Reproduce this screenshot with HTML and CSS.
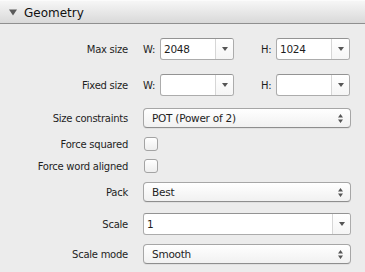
FILE: index.html
```html
<!DOCTYPE html>
<html lang="en">
  <head>
    <meta charset="utf-8">
    <meta name="viewport" content="width=device-width, initial-scale=1.0">
    <title>Geometry</title>
    <link rel="stylesheet" href="styles.css">
  </head>
  <body>
    <div class="panel">
      <div class="panel-header">
        <svg class="disclosure" width="8" height="7" viewBox="0 0 8 7"><path d="M0 0.5 H8 L4 6.5 Z" fill="#5a5a5a"/></svg>
        <span class="panel-title">Geometry</span>
      </div>
      <div class="form">
        <div class="row gap-wide">
          <span class="label">Max size</span>
          <div class="pair">
            <span class="axis">W:</span>
            <div class="combo combo-small">
              <span class="value">2048</span>
              <span class="combo-btn"><svg width="6" height="4" viewBox="0 0 6 4"><path d="M0 0 H6 L3 4 Z" fill="#555"/></svg></span>
            </div>
            <span class="axis axis-h">H:</span>
            <div class="combo combo-small">
              <span class="value">1024</span>
              <span class="combo-btn"><svg width="6" height="4" viewBox="0 0 6 4"><path d="M0 0 H6 L3 4 Z" fill="#555"/></svg></span>
            </div>
          </div>
        </div>
        <div class="row gap-wide">
          <span class="label">Fixed size</span>
          <div class="pair">
            <span class="axis">W:</span>
            <div class="combo combo-small">
              <span class="value"></span>
              <span class="combo-btn"><svg width="6" height="4" viewBox="0 0 6 4"><path d="M0 0 H6 L3 4 Z" fill="#555"/></svg></span>
            </div>
            <span class="axis axis-h">H:</span>
            <div class="combo combo-small">
              <span class="value"></span>
              <span class="combo-btn"><svg width="6" height="4" viewBox="0 0 6 4"><path d="M0 0 H6 L3 4 Z" fill="#555"/></svg></span>
            </div>
          </div>
        </div>
        <div class="row gap-mid">
          <span class="label">Size constraints</span>
          <div class="select">
            <span class="value">POT (Power of 2)</span>
            <svg class="updown" width="5" height="9" viewBox="0 0 5 9"><path d="M2.5 0 L5 3.5 H0 Z M0 5.5 H5 L2.5 9 Z" fill="#555"/></svg>
          </div>
        </div>
        <div class="row">
          <span class="label">Force squared</span>
          <span class="checkbox"></span>
        </div>
        <div class="row gap-tight">
          <span class="label">Force word aligned</span>
          <span class="checkbox"></span>
        </div>
        <div class="row">
          <span class="label">Pack</span>
          <div class="select">
            <span class="value">Best</span>
            <svg class="updown" width="5" height="9" viewBox="0 0 5 9"><path d="M2.5 0 L5 3.5 H0 Z M0 5.5 H5 L2.5 9 Z" fill="#555"/></svg>
          </div>
        </div>
        <div class="row gap-loose">
          <span class="label">Scale</span>
          <div class="combo">
            <span class="value">1</span>
            <span class="combo-btn"><svg width="6" height="4" viewBox="0 0 6 4"><path d="M0 0 H6 L3 4 Z" fill="#555"/></svg></span>
          </div>
        </div>
        <div class="row">
          <span class="label">Scale mode</span>
          <div class="select">
            <span class="value">Smooth</span>
            <svg class="updown" width="5" height="9" viewBox="0 0 5 9"><path d="M2.5 0 L5 3.5 H0 Z M0 5.5 H5 L2.5 9 Z" fill="#555"/></svg>
          </div>
        </div>
      </div>
    </div>
  </body>
</html>
```
FILE: styles.css
```css
body {
  margin: 0;
  padding: 0;
  background: #ececec;
  font-family: "DejaVu Sans", "Liberation Sans", sans-serif;
  font-size: 10px;
  letter-spacing: -0.25px;
  color: #1e1e1e;
}
.panel {
  width: 365px;
  height: 272px;
  overflow: hidden;
}
.panel-header {
  display: flex;
  align-items: center;
  padding-left: 9px;
  background: linear-gradient(#f6f6f6, #d9d9d9);
  border-top: 1px solid #fbfbfb;
  border-bottom: 1px solid #8f8f8f;
  box-sizing: border-box;
  height: 24px;
}
.disclosure {
  margin-right: 7px;
  margin-top: 1px;
}
.panel-title {
  font-size: 12px;
  letter-spacing: 0;
  color: #111;
  padding-top: 1px;
}
.form {
  padding-right: 14px;
}
.row {
  display: grid;
  grid-template-columns: 128px 1fr;
  column-gap: 15px;
  align-items: center;
  margin-top: 9px;
}
.gap-wide {
  margin-top: 14px;
}
.gap-mid {
  margin-top: 12px;
}
.gap-tight {
  margin-top: 8px;
}
.gap-loose {
  margin-top: 11px;
}
.label {
  text-align: right;
  white-space: nowrap;
}
.pair {
  display: flex;
  align-items: center;
}
.axis {
  width: 17px;
}
.axis-h {
  margin-left: 27px;
  width: 15px;
}
.combo {
  height: 22px;
  box-sizing: border-box;
  display: flex;
  align-items: stretch;
  background: #fff;
  border: 1px solid #acacac;
  border-top-color: #939393;
  border-radius: 3px;
}
.combo-small {
  width: 74px;
}
.combo .value {
  flex: 1;
  padding-left: 3px;
  line-height: 20px;
  font-size: 10.5px;
}
.combo-btn {
  width: 17px;
  border-left: 1px solid #d6d6d6;
  background: linear-gradient(#ffffff, #f5f5f5);
  border-radius: 0 2px 2px 0;
  display: flex;
  align-items: center;
  justify-content: center;
}
.select {
  height: 20px;
  box-sizing: border-box;
  display: flex;
  align-items: center;
  justify-content: space-between;
  padding: 0 7px 0 8px;
  background: linear-gradient(#ffffff, #f1f1f1);
  border: 1px solid #a6a6a6;
  border-bottom-color: #8e8e8e;
  border-radius: 4px;
  box-shadow: 0 1px 0 rgba(0,0,0,0.05);
}
.select .value {
  font-size: 10.5px;
}
.checkbox {
  width: 14px;
  height: 14px;
  box-sizing: border-box;
  margin-left: 1px;
  border: 1px solid #a3a3a3;
  border-radius: 3px;
  background: linear-gradient(#ffffff, #eeeeee);
}
```
